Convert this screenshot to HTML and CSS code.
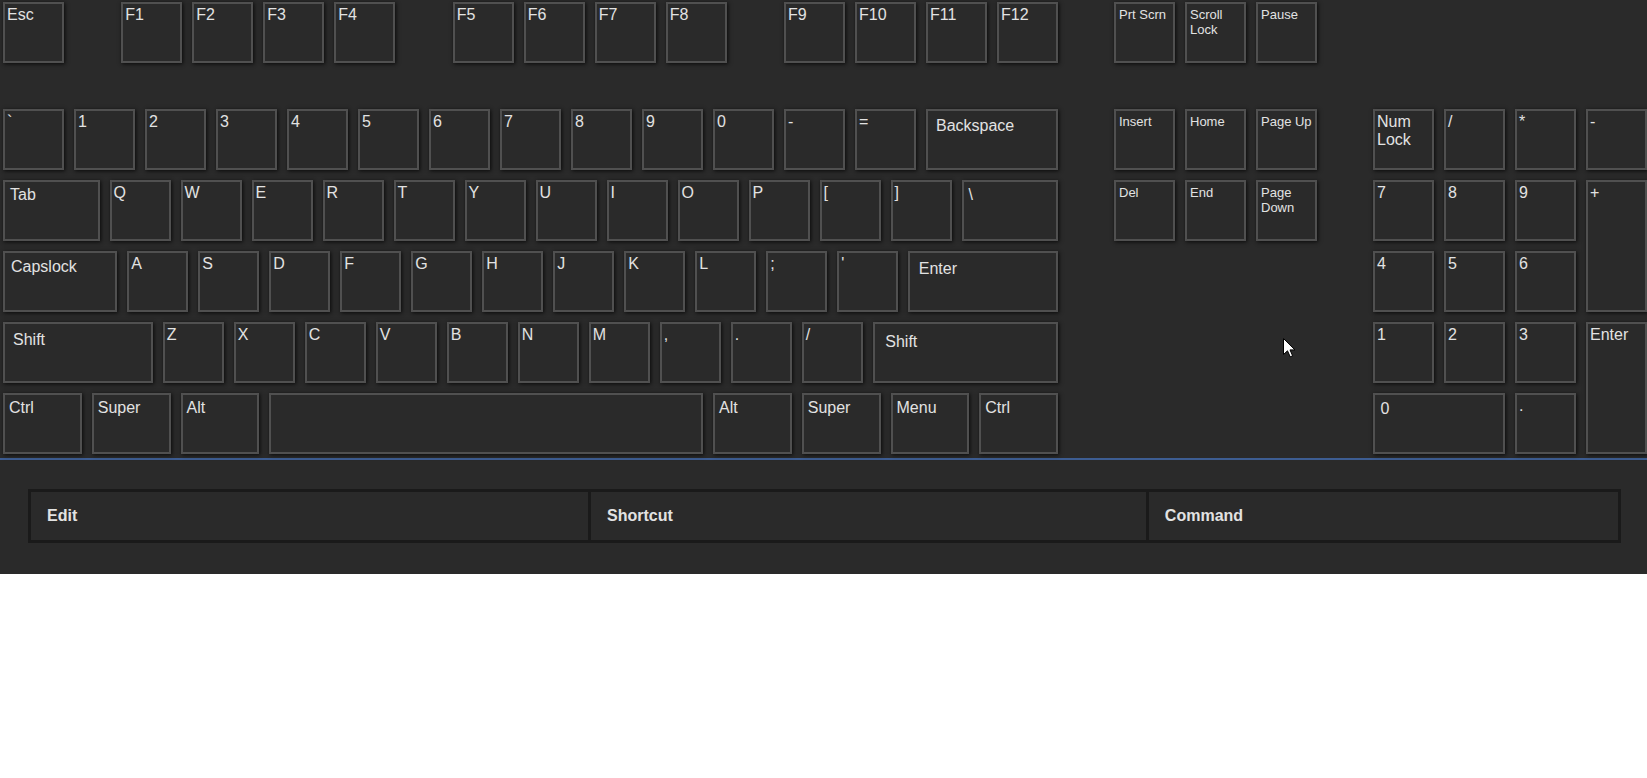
FILE: index.html
```html
<!DOCTYPE html>
<html lang="en">
<head>
<meta charset="utf-8">
<title>Keyboard shortcuts</title>
<link rel="stylesheet" href="styles.css">
</head>
<body>
<div class="keyboard">
  <div class="main">
    <div class="row frow">
      <div class="key">Esc</div>
      <div class="key fsep">F1</div>
      <div class="key">F2</div>
      <div class="key">F3</div>
      <div class="key">F4</div>
      <div class="key fsep">F5</div>
      <div class="key">F6</div>
      <div class="key">F7</div>
      <div class="key">F8</div>
      <div class="key fsep">F9</div>
      <div class="key">F10</div>
      <div class="key">F11</div>
      <div class="key">F12</div>
    </div>
    <div class="row">
      <div class="key">`</div>
      <div class="key">1</div>
      <div class="key">2</div>
      <div class="key">3</div>
      <div class="key">4</div>
      <div class="key">5</div>
      <div class="key">6</div>
      <div class="key">7</div>
      <div class="key">8</div>
      <div class="key">9</div>
      <div class="key">0</div>
      <div class="key">-</div>
      <div class="key">=</div>
      <div class="key w2 pad-bs">Backspace</div>
    </div>
    <div class="row">
      <div class="key w15 pad-m">Tab</div>
      <div class="key">Q</div>
      <div class="key">W</div>
      <div class="key">E</div>
      <div class="key">R</div>
      <div class="key">T</div>
      <div class="key">Y</div>
      <div class="key">U</div>
      <div class="key">I</div>
      <div class="key">O</div>
      <div class="key">P</div>
      <div class="key">[</div>
      <div class="key">]</div>
      <div class="key w15 pad-m">\</div>
    </div>
    <div class="row">
      <div class="key w175 pad-caps">Capslock</div>
      <div class="key">A</div>
      <div class="key">S</div>
      <div class="key">D</div>
      <div class="key">F</div>
      <div class="key">G</div>
      <div class="key">H</div>
      <div class="key">J</div>
      <div class="key">K</div>
      <div class="key">L</div>
      <div class="key">;</div>
      <div class="key">'</div>
      <div class="key w225 pad-enter">Enter</div>
    </div>
    <div class="row">
      <div class="key w225 pad-l">Shift</div>
      <div class="key">Z</div>
      <div class="key">X</div>
      <div class="key">C</div>
      <div class="key">V</div>
      <div class="key">B</div>
      <div class="key">N</div>
      <div class="key">M</div>
      <div class="key">,</div>
      <div class="key">.</div>
      <div class="key">/</div>
      <div class="key w275 pad-xl">Shift</div>
    </div>
    <div class="row">
      <div class="key w125 pad-s">Ctrl</div>
      <div class="key w125 pad-s">Super</div>
      <div class="key w125 pad-s">Alt</div>
      <div class="key w625"></div>
      <div class="key w125 pad-s">Alt</div>
      <div class="key w125 pad-s">Super</div>
      <div class="key w125 pad-s">Menu</div>
      <div class="key w125 pad-s">Ctrl</div>
    </div>
  </div>

  <div class="nav">
    <div class="row frow">
      <div class="key small">Prt Scrn</div>
      <div class="key small">Scroll Lock</div>
      <div class="key small">Pause</div>
    </div>
    <div class="row">
      <div class="key small">Insert</div>
      <div class="key small">Home</div>
      <div class="key small">Page Up</div>
    </div>
    <div class="row">
      <div class="key small">Del</div>
      <div class="key small">End</div>
      <div class="key small">Page Down</div>
    </div>
  </div>

  <div class="numpad">
    <div class="key">Num Lock</div>
    <div class="key">/</div>
    <div class="key">*</div>
    <div class="key">-</div>
    <div class="key">7</div>
    <div class="key">8</div>
    <div class="key">9</div>
    <div class="key tall">+</div>
    <div class="key">4</div>
    <div class="key">5</div>
    <div class="key">6</div>
    <div class="key">1</div>
    <div class="key">2</div>
    <div class="key">3</div>
    <div class="key tall">Enter</div>
    <div class="key wide pad-n">0</div>
    <div class="key">.</div>
  </div>
</div>

<div class="info">
  <table class="shortcuts">
    <colgroup>
      <col class="c-edit">
      <col class="c-shortcut">
      <col class="c-command">
    </colgroup>
    <thead>
      <tr>
        <th>Edit</th>
        <th>Shortcut</th>
        <th>Command</th>
      </tr>
    </thead>
  </table>
</div>

<svg class="cursor" width="13" height="20" viewBox="0 0 13 20" aria-hidden="true">
  <path d="M0.5 0.5 V16.5 L4.5 12.8 L7.2 18.8 L9.6 17.8 L7 11.9 H12 Z" fill="#fff" stroke="#000" stroke-width="1" stroke-linejoin="miter"/>
</svg>
</body>
</html>
```

FILE: styles.css
```css
html, body {
  margin: 0;
  padding: 0;
  background: #ffffff;
}

body {
  font-family: "Liberation Sans", Arial, sans-serif;
  position: relative;
  min-height: 778px;
}

.keyboard {
  display: flex;
  align-items: flex-start;
  gap: 56px;
  padding: 2px 0 4px 3px;
  background: #2a2a2a;
  border-bottom: 2px solid #3d5d92;
}

.main,
.nav {
  display: flex;
  flex-direction: column;
  gap: 10px;
}

.row {
  display: flex;
  gap: 10px;
}

.frow {
  margin-bottom: 36px;
}

.fsep {
  margin-left: 47.33px;
}

.key {
  box-sizing: border-box;
  width: 61px;
  height: 61px;
  flex: none;
  border: 2px solid #505050;
  background: #2a2a2a;
  box-shadow: 1px 1px 4px #0a0a0a;
  padding: 2px 1px 0 2px;
  color: #e2e2e2;
  font-size: 16px;
  line-height: normal;
  overflow: hidden;
}

.w125 { width: 78.75px; }
.w15  { width: 96.5px; }
.w175 { width: 114.25px; }
.w2   { width: 132px; }
.w225 { width: 149.75px; }
.w275 { width: 185.25px; }
.w625 { width: 433.75px; }

.pad-s     { padding: 4px 2px 0 4px; }
.pad-m     { padding: 4px 2px 0 5px; }
.pad-bs    { padding: 6px 2px 0 8px; }
.pad-caps  { padding: 5px 2px 0 6px; }
.pad-enter { padding: 7px 2px 0 8.5px; }
.pad-l     { padding: 7px 2px 0 8px; }
.pad-xl    { padding: 8.5px 2px 0 10.5px; }
.pad-n     { padding: 5px 2px 0 5.5px; }

.small {
  font-size: 13px;
  padding: 3px 1px 0 3px;
}

.numpad {
  display: grid;
  grid-template-columns: repeat(4, 61px);
  grid-auto-rows: 61px;
  gap: 10px;
  margin-top: 107px;
}

.numpad .key {
  width: auto;
  height: auto;
}

.numpad .tall {
  grid-row: span 2;
}

.numpad .wide {
  grid-column: span 2;
}

.info {
  background: #2a2a2a;
  padding: 29px 26px 31px 28px;
}

.shortcuts {
  width: 100%;
  table-layout: fixed;
  border-collapse: separate;
  border-spacing: 0;
  border: 3px solid #1a1a1a;
}

.c-edit     { width: 35.1%; }
.c-shortcut { width: 35.15%; }
.c-command  { width: 29.75%; }

.shortcuts th {
  text-align: left;
  padding: 15px 15px 15px 16px;
  font-size: 16px;
  font-weight: bold;
  color: #e2e2e2;
  line-height: normal;
}

.shortcuts th + th {
  border-left: 3px solid #1a1a1a;
}

.cursor {
  position: absolute;
  left: 1283px;
  top: 338px;
}
```
